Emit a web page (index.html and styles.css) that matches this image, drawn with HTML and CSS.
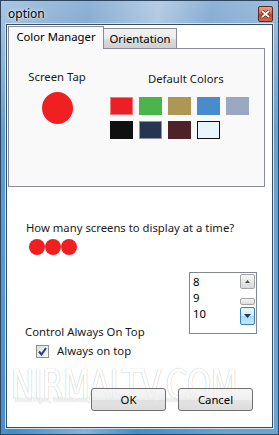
FILE: index.html
```html
<!DOCTYPE html>
<html lang="en">
<head>
  <meta charset="UTF-8" />
  <title>option</title>
  <link rel="stylesheet" href="styles.css">
</head>
<body>
  <div class="window">
    <div class="titlebar">
      <span class="title">option</span>
      <span class="close">
        <svg width="9" height="8" viewBox="0 0 9 8"><path d="M1 1 L8 7 M8 1 L1 7" stroke="#5a2318" stroke-width="3.2"/><path d="M1 1 L8 7 M8 1 L1 7" stroke="#fff" stroke-width="1.8"/></svg>
      </span>
    </div>
    <div class="client">
      <div class="tabs">
        <div class="tab active">Color Manager</div>
        <div class="tab">Orientation</div>
      </div>
      <div class="panel">
        <div class="tap-col">
          <div class="label">Screen Tap</div>
          <div class="tap-dot"></div>
        </div>
        <div class="colors-col">
          <div class="label colors-label">Default Colors</div>
          <div class="swatches">
            <div class="swatch red"></div>
            <div class="swatch green"></div>
            <div class="swatch tan"></div>
            <div class="swatch blue"></div>
            <div class="swatch slate"></div>
            <div class="swatch black"></div>
            <div class="swatch navy"></div>
            <div class="swatch maroon"></div>
            <div class="swatch ice"></div>
          </div>
        </div>
      </div>

      <div class="question">How many screens to display at a time?</div>
      <div class="dots"><span></span><span></span><span></span></div>

      <div class="ontop-row">
        <div class="ontop-label">Control Always On Top</div>
        <div class="listbox">
          <div class="items">
            <div>8</div>
            <div>9</div>
            <div>10</div>
          </div>
          <div class="scroll">
            <div class="sbtn up"><svg width="5" height="3" viewBox="0 0 5 3"><path d="M0 3 L2.5 0 L5 3 Z" fill="#4d4d4d"/></svg></div>
            <div class="thumb"></div>
            <div class="sbtn down"><svg width="7" height="4" viewBox="0 0 7 4"><path d="M0 0 L7 0 L3.5 4 Z" fill="#1b3c5c"/></svg></div>
          </div>
        </div>
      </div>

      <label class="check">
        <span class="box"><svg width="9" height="9" viewBox="0 0 9 9"><path d="M1 4.5 L3.5 7.5 L8 1" fill="none" stroke="#2b3a8a" stroke-width="2"/></svg></span>
        Always on top
      </label>

      <div class="buttons">
        <button>OK</button>
        <button>Cancel</button>
      </div>

      <div class="watermark">
        <div class="wm-big">NIRMALTV.COM</div>
        <div class="wm-small">TechTips, Windows, Freeware, Social Media and Internet</div>
      </div>
    </div>
  </div>
</body>
</html>
```

FILE: styles.css
```css
body {
  margin: 0;
  background: #fff;
  font-family: 'Noto Sans', 'DejaVu Sans', sans-serif;
  font-size: 11.3px;
  color: #1a1a1a;
}
.window {
  width: 279px;
  height: 435px;
  box-sizing: border-box;
  border: 1px solid #2c4661;
  padding: 0 5px 6px 5px;
  display: flex;
  flex-direction: column;
  background:
    linear-gradient(100deg, rgba(255,255,255,0.25) 0%, rgba(255,255,255,0) 25%, rgba(255,255,255,0.35) 45%, rgba(255,255,255,0) 60%, rgba(255,255,255,0.2) 85%),
    linear-gradient(180deg, #8fb3d6 0%, #86acd3 6%, #3c8bca 30%, #3f8ecb 100%);
}
.titlebar {
  height: 23px;
  display: flex;
  align-items: center;
  justify-content: space-between;
}
.title {
  font-size: 12px;
  color: #000;
  margin-left: 2px;
  margin-top: 2px;
  text-shadow: 0 0 4px #e6f0fa, 0 0 2px #e6f0fa;
}
.close {
  width: 13px;
  height: 14px;
  margin-top: 3px;
  border: 1px solid #5d2a22;
  border-radius: 2px;
  background: linear-gradient(180deg, #e9a08e 0%, #d8664c 45%, #c4412a 55%, #d56a48 100%);
  display: flex;
  align-items: center;
  justify-content: center;
}
.client {
  flex: 1;
  position: relative;
  background: #fff;
  border: 1px solid #3a4e63;
  box-shadow: 0 0 0 1px #d5e4f2;
  overflow: hidden;
}

/* tabs */
.tabs {
  display: flex;
  align-items: flex-end;
  margin: 1px 0 0 1px;
}
.tab {
  box-sizing: border-box;
  border: 1px solid #898c95;
  border-bottom: none;
  color: #000;
  text-align: center;
}
.tab.active {
  width: 96px;
  height: 23px;
  line-height: 20px;
  background: #f9f9f9;
  margin-bottom: -1px;
  position: relative;
  z-index: 1;
}
.tab:not(.active) {
  width: 73px;
  height: 20px;
  line-height: 20px;
  border-left: none;
  background: linear-gradient(180deg, #f2f2f2 0%, #ebebeb 50%, #dddddd 51%, #cfcfcf 100%);
}
.panel {
  box-sizing: border-box;
  width: 257px;
  height: 139px;
  margin-left: 1px;
  border: 1px solid #898c95;
  background: #f9f9f9;
  display: flex;
  padding-top: 20px;
}
.label {
  line-height: 16px;
  color: #1a1a1a;
}
.tap-col {
  width: 96px;
  text-align: center;
}
.tap-dot {
  width: 31px;
  height: 32px;
  border-radius: 50%;
  background: #ef1f22;
  margin: 7px auto 0;
}
.colors-col {
  margin-left: 5px;
}
.colors-label {
  margin: 2px 0 0 38px;
}
.swatches {
  display: grid;
  grid-template-columns: repeat(5, 23px);
  grid-auto-rows: 18px;
  gap: 6px;
  margin-top: 10px;
}
.swatch { box-sizing: border-box; }
.red { background: #ee1f24; border: 1px solid #f07a80; }
.green { background: #4ab54a; }
.tan { background: #ae9754; }
.blue { background: #4a8ccb; }
.slate { background: #9aa8c0; }
.black { background: #101010; }
.navy { background: #263552; border: 1px solid #8b93a4; }
.maroon { background: #4f2128; }
.ice { background: #eaf4fe; border: 1px solid #111; }

/* screens */
.question {
  margin: 33px 0 0 19px;
  line-height: 16px;
}
.dots {
  display: flex;
  margin: 3px 0 0 22px;
}
.dots span {
  width: 16px;
  height: 16px;
  border-radius: 50%;
  background: #ef1f22;
}
.ontop-row {
  display: flex;
  justify-content: space-between;
  align-items: flex-end;
  margin-top: 17px;
}
.ontop-label {
  line-height: 16px;
  margin: 0 0 -6px 18px;
}
.listbox {
  box-sizing: border-box;
  width: 68px;
  height: 62px;
  margin-right: 15px;
  border: 1px solid #828790;
  display: flex;
  background: #fff;
}
.items {
  flex: 1;
  padding: 1px 0 0 3px;
  line-height: 16px;
  color: #000;
}
.scroll {
  width: 15px;
  margin-right: 1px;
  display: flex;
  flex-direction: column;
  align-items: center;
}
.sbtn {
  box-sizing: border-box;
  width: 15px;
  border-radius: 2px;
  display: flex;
  align-items: center;
  justify-content: center;
}
.sbtn.up {
  height: 15px;
  margin-top: 1px;
  border: 1px solid #a4a4a4;
  background: linear-gradient(180deg, #f5f5f5 0%, #e8e8e8 50%, #d9d9d9 100%);
}
.thumb {
  box-sizing: border-box;
  width: 15px;
  height: 7px;
  margin-top: 9px;
  border: 1px solid #a4a4a4;
  border-radius: 2px;
  background: linear-gradient(180deg, #f6f6f6, #dcdcdc);
}
.sbtn.down {
  height: 18px;
  margin-top: 2px;
  border: 1px solid #3c7fb1;
  background: linear-gradient(180deg, #e6f5fd 0%, #d4eefc 50%, #a9dbf6 51%, #bfe6fa 100%);
}
.check {
  display: flex;
  align-items: center;
  gap: 8px;
  margin: 9px 0 0 29px;
  line-height: 16px;
}
.box {
  box-sizing: border-box;
  width: 13px;
  height: 13px;
  border: 1px solid #8e8f8f;
  background: linear-gradient(135deg, #dcdcdc, #fbfbfb);
  display: flex;
  align-items: center;
  justify-content: center;
}
.buttons {
  display: flex;
  justify-content: flex-end;
  gap: 12px;
  margin: 29px 19px 0 0;
  position: relative;
  z-index: 1;
}
.buttons button {
  width: 75px;
  height: 23px;
  font-family: inherit;
  font-size: 11.3px;
  color: #000;
  border: 1px solid #707070;
  border-radius: 3px;
  background: linear-gradient(180deg, rgba(242,242,242,0.75) 0%, rgba(235,235,235,0.75) 50%, rgba(221,221,221,0.75) 51%, rgba(207,207,207,0.75) 100%);
  padding: 0;
}

/* watermark laid over the dialog */
.watermark {
  position: absolute;
  left: 4px;
  top: 340px;
  color: #fff;
  pointer-events: none;
}
.wm-big {
  font-family: 'DejaVu Sans', sans-serif;
  font-size: 40px;
  letter-spacing: -1px;
  line-height: 40px;
  text-shadow: 0 0 1px #bcbcbc, 0 0 1px #bcbcbc;
  transform: scaleX(0.78);
  transform-origin: left;
  opacity: 0.85;
}
.wm-small {
  font-family: 'Liberation Sans', sans-serif;
  font-size: 8px;
  font-weight: bold;
  color: #f7f7f7;
  text-shadow: 0 0 1px #b0b0b0;
  margin: -10px 0 0 3px;
  opacity: 0.85;
}
```
